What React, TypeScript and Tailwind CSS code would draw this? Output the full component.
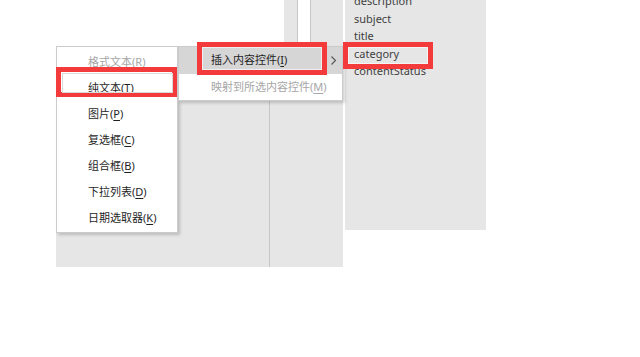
import React from "react";

const menuItems = [
  { label: "格式文本", key: "R", disabled: true },
  { label: "纯文本", key: "T" },
  { label: "图片", key: "P" },
  { label: "复选框", key: "C" },
  { label: "组合框", key: "B" },
  { label: "下拉列表", key: "D" },
  { label: "日期选取器", key: "K" },
];

const fields = ["description", "subject", "title", "category", "contentStatus"];

function Label({ label, k }: { label: string; k: string }) {
  return (
    <span>
      {label}(<span className="underline underline-offset-2">{k}</span>)
    </span>
  );
}

function RedBox({ className, inner }: { className: string; inner: string }) {
  return (
    <div className={`absolute border-[5px] border-[#f33b3b] ${className}`}>
      <div className={`h-full w-full border ${inner}`} />
    </div>
  );
}

export default function App() {
  return (
    <div className="relative h-[357px] w-[640px] overflow-hidden bg-white font-['Noto_Sans','Noto_Sans_CJK_SC',sans-serif] text-[11px]">
      {/* background panes */}
      <div className="flex">
        <div className="ml-[56px] flex w-[287px] flex-col">
          <div className="flex h-[46px]">
            <div className="w-[228px]" />
            <div className="w-[13px] bg-[#e6e6e6]" />
            <div className="w-px bg-[#c9c9c9]" />
            <div className="w-[12px] bg-white" />
            <div className="w-px bg-[#c9c9c9]" />
            <div className="flex-1 bg-[#e6e6e6]" />
          </div>
          <div className="flex h-[221px] bg-[#e6e6e6]">
            <div className="w-[213px]" />
            <div className="w-px bg-[#c6c6c6]" />
          </div>
        </div>
        <div className="ml-[2px] h-[230px] w-[141px] overflow-hidden bg-[#e6e6e6] pl-[9px] text-[#3f3f3f]">
          <div className="-mt-[8px] flex flex-col">
            {fields.map((f) => (
              <div key={f} className="h-[17.5px] leading-[17.5px]">
                {f}
              </div>
            ))}
          </div>
        </div>
      </div>

      {/* context menu */}
      <div className="absolute left-[56px] top-[46px] h-[187px] w-[122px] border border-[#cccccc] bg-white pt-[2px] shadow-[2px_2px_3px_rgba(0,0,0,0.18)]">
        {menuItems.map((m) => (
          <div
            key={m.key}
            className={`flex h-[26px] items-center pl-[31px] ${m.disabled ? "text-[#a6a6a6]" : "text-[#1f1f1f]"}`}
          >
            <Label label={m.label} k={m.key} />
          </div>
        ))}
      </div>

      {/* submenu */}
      <div className="absolute left-[178px] top-[46px] h-[55px] w-[165px] border border-[#cccccc] bg-white shadow-[2px_2px_3px_rgba(0,0,0,0.18)]">
        <div className="flex h-[27px] items-center justify-between bg-[#d6d6d6] pl-[32px] pr-[5px] text-[#1f1f1f]">
          <Label label="插入内容控件" k="I" />
          <svg width="7" height="11" viewBox="0 0 7 11" fill="none">
            <path d="M1.5 1.5l4 4-4 4" stroke="#555" strokeWidth="1.1" />
          </svg>
        </div>
        <div className="flex h-[26px] items-center pl-[32px] text-[#a6a6a6]">
          <Label label="映射到所选内容控件" k="M" />
        </div>
      </div>

      {/* annotation frames */}
      <RedBox className="left-[56px] top-[67px] h-[30px] w-[121px]" inner="m-px border-[#dadada]" />
      <RedBox className="left-[197px] top-[42px] h-[33px] w-[130px]" inner="border-[#efefef]" />
      <RedBox className="left-[343px] top-[42px] h-[27px] w-[90px]" inner="border-[#f4f4f4]" />
    </div>
  );
}
